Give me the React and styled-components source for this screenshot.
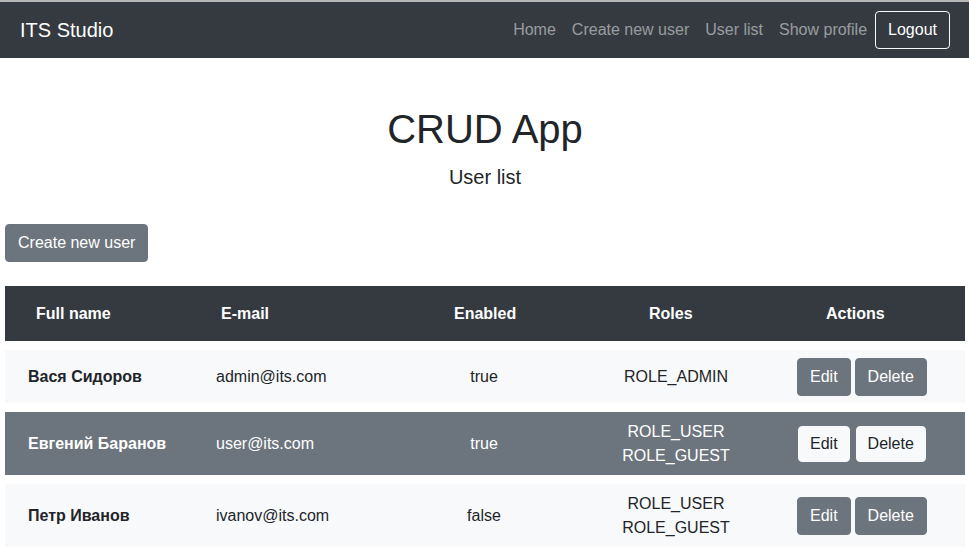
import React from "react";
import styled, { createGlobalStyle } from "styled-components";

const users = [
  { name: "Вася Сидоров", email: "admin@its.com", enabled: "true", roles: ["ROLE_ADMIN"] },
  { name: "Евгений Баранов", email: "user@its.com", enabled: "true", roles: ["ROLE_USER", "ROLE_GUEST"], dark: true },
  { name: "Петр Иванов", email: "ivanov@its.com", enabled: "false", roles: ["ROLE_USER", "ROLE_GUEST"] },
];

const App = () => {
  return (
    <>
      <Global />
      <TopLine />
      <Navbar>
        <Brand>ITS Studio</Brand>
        <NavLinks>
          <NavLink>Home</NavLink>
          <NavLink>Create new user</NavLink>
          <NavLink>User list</NavLink>
          <NavLink>Show profile</NavLink>
          <LogoutBtn>Logout</LogoutBtn>
        </NavLinks>
      </Navbar>
      <Main>
        <Title>CRUD App</Title>
        <Subtitle>User list</Subtitle>
        <CreateBtn>Create new user</CreateBtn>
        <Table>
          <HeadRow>
            <HeadCell pad="31px">Full name</HeadCell>
            <HeadCell pad="21px">E-mail</HeadCell>
            <HeadCell pad="64px">Enabled</HeadCell>
            <HeadCell pad="71px">Roles</HeadCell>
            <HeadCell pad="52px">Actions</HeadCell>
          </HeadRow>
          {users.map((u) => (
            <Row key={u.email} dark={u.dark}>
              <NameCell>{u.name}</NameCell>
              <EmailCell>{u.email}</EmailCell>
              <CenterCell>{u.enabled}</CenterCell>
              <CenterCell>
                {u.roles.map((r) => (
                  <div key={r}>{r}</div>
                ))}
              </CenterCell>
              <ActionCell>
                <SmallBtn light={u.dark}>Edit</SmallBtn>
                <SmallBtn light={u.dark}>Delete</SmallBtn>
              </ActionCell>
            </Row>
          ))}
        </Table>
      </Main>
    </>
  );
};

export default App;

const Global = createGlobalStyle`
  body {
    margin: 0;
    background: #fff;
    font-family: "Liberation Sans", Arial, sans-serif;
    font-size: 16px;
    line-height: 1.5;
    color: #212529;
  }
`;
const TopLine = styled.div`
  height: 2px;
  background: #b4b6b8;
`;
const Navbar = styled.nav`
  height: 56px;
  background: #343a40;
  display: flex;
  align-items: center;
  justify-content: space-between;
  padding: 0 20px;
  box-sizing: border-box;
`;
const Brand = styled.div`
  color: #fff;
  font-size: 20px;
`;
const NavLinks = styled.div`
  display: flex;
  align-items: center;
`;
const NavLink = styled.a`
  color: rgba(255, 255, 255, 0.5);
  font-size: 16px;
  padding: 0 8px;
  cursor: pointer;
  &:hover {
    color: rgba(255, 255, 255, 0.75);
  }
`;
const LogoutBtn = styled.button`
  font-family: inherit;
  font-size: 16px;
  color: #fff;
  background: transparent;
  border: 1px solid #f8f9fa;
  border-radius: 4px;
  height: 38px;
  padding: 0 12px;
  margin-right: -1px;
  margin-top: -1px;
`;
const Main = styled.main`
  padding: 0 4px 0 5px;
  display: flex;
  flex-direction: column;
`;
const Title = styled.h1`
  margin: 47px 0 0;
  text-align: center;
  font-size: 40px;
  font-weight: 400;
  line-height: 1.2;
`;
const Subtitle = styled.div`
  text-align: center;
  font-size: 20px;
  line-height: 1.2;
  margin-top: 12px;
`;
const CreateBtn = styled.button`
  align-self: flex-start;
  margin-top: 35px;
  font-family: inherit;
  font-size: 16px;
  color: #fff;
  background: #6c757d;
  border: 1px solid #6c757d;
  border-radius: 4px;
  height: 38px;
  padding: 0 12px;
`;
const Table = styled.div`
  margin-top: 24px;
  display: flex;
  flex-direction: column;
  gap: 9px;
`;
const cols = "195px 190px 188px 196px 1fr";
const HeadRow = styled.div`
  display: grid;
  grid-template-columns: ${cols};
  height: 55px;
  align-items: center;
  background: #343a40;
  color: #fff;
  font-weight: 700;
`;
const HeadCell = styled.div`
  padding-left: ${({ pad }) => pad};
`;
const Row = styled.div`
  display: grid;
  grid-template-columns: ${cols};
  align-items: center;
  padding: 7.5px 0;
  background: ${({ dark }) => (dark ? "#6c757d" : "#f8f9fa")};
  color: ${({ dark }) => (dark ? "#fff" : "#212529")};
`;
const NameCell = styled.div`
  padding-left: 23px;
  font-weight: 700;
`;
const EmailCell = styled.div`
  padding-left: 16px;
`;
const CenterCell = styled.div`
  text-align: center;
`;
const ActionCell = styled.div`
  display: flex;
  gap: 4px;
  padding-left: 23px;
`;
const SmallBtn = styled.button`
  font-family: inherit;
  font-size: 16px;
  height: ${({ light }) => (light ? "36px" : "38px")};
  padding: 0 ${({ light }) => (light ? "11px" : "12px")};
  margin: 0 ${({ light }) => (light ? "1px" : "0")};
  border-radius: 4px;
  border: 1px solid ${({ light }) => (light ? "#f8f9fa" : "#6c757d")};
  background: ${({ light }) => (light ? "#f8f9fa" : "#6c757d")};
  color: ${({ light }) => (light ? "#212529" : "#fff")};
  cursor: pointer;
`;
